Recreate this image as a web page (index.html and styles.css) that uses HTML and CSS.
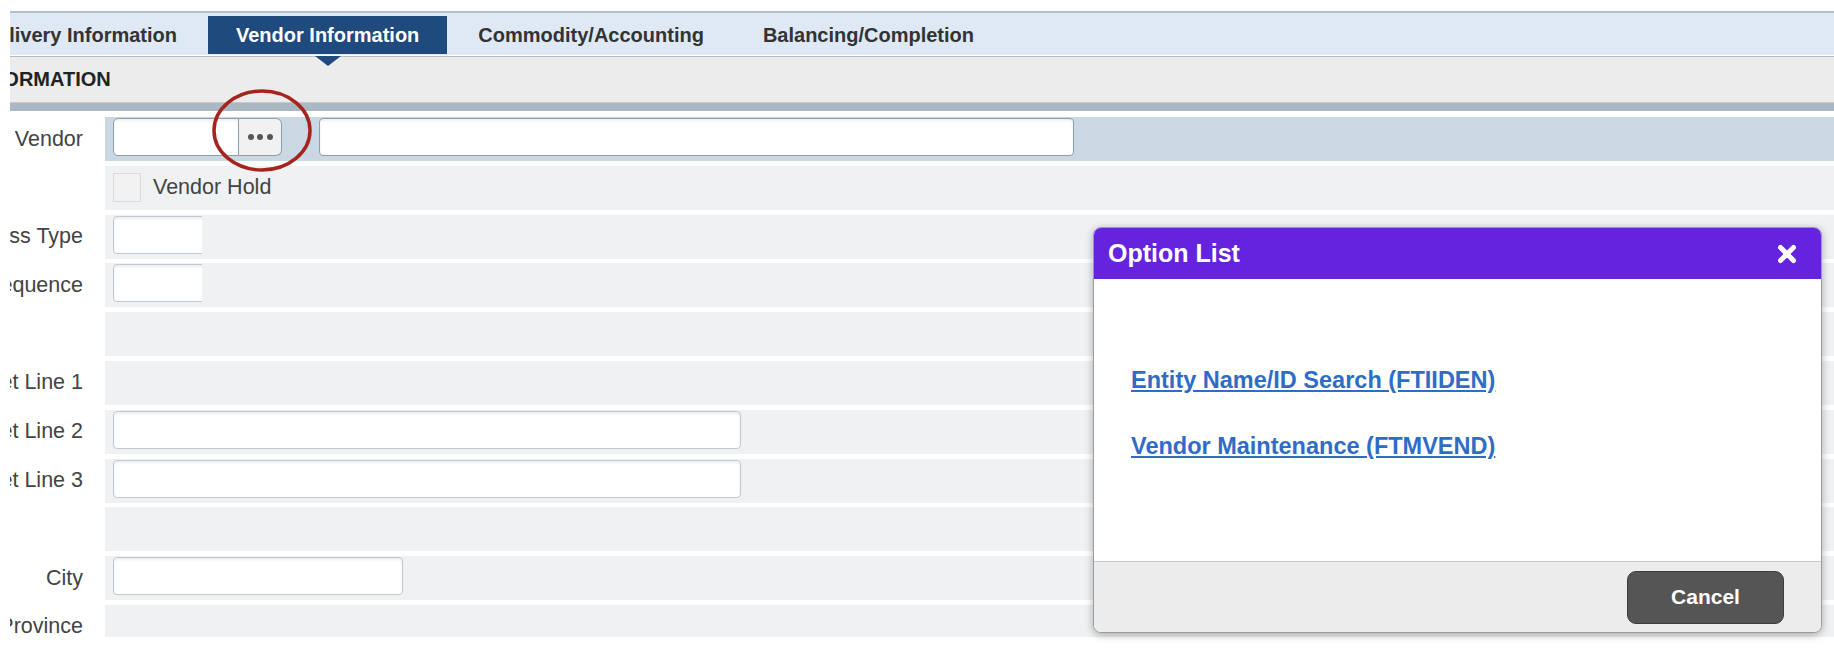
FILE: index.html
```html
<!DOCTYPE html>
<html lang="en">
<head>
  <meta charset="UTF-8">
  <title>Purchase Order - Vendor Information</title>
  <link rel="stylesheet" href="styles.css">
</head>
<body>
  <div class="screen">
    <div class="viewport">
      <div class="tabs">
        <div class="tab tab-first"><span>Requestor/Delivery Information</span></div>
        <div class="tab active">Vendor Information</div>
        <div class="tab">Commodity/Accounting</div>
        <div class="tab">Balancing/Completion</div>
      </div>

      <div class="section-head"><span class="section-title">VENDOR INFORMATION</span></div>
      <div class="section-band"></div>

      <div class="form">
        <div class="row">
          <label class="lbl"><span>Vendor</span></label>
          <div class="field current">
            <div class="lookup">
              <input type="text" class="inp inp-code">
              <button class="dots" type="button"><i></i><i></i><i></i></button>
              <svg class="mark" width="100" height="83" viewBox="0 0 100 83">
                <ellipse cx="50" cy="41.5" rx="48" ry="39.5" fill="none" stroke="#a5241e" stroke-width="3.5"/>
              </svg>
            </div>
            <input type="text" class="inp inp-name">
          </div>
        </div>

        <div class="row">
          <label class="lbl"></label>
          <div class="field middle">
            <span class="check"></span>
            <span class="check-text">Vendor Hold</span>
          </div>
        </div>

        <div class="row">
          <label class="lbl"><span>Address Type</span></label>
          <div class="field">
            <div class="clip"><input type="text" class="inp inp-wide"></div>
          </div>
        </div>

        <div class="row">
          <label class="lbl"><span>Address Sequence</span></label>
          <div class="field">
            <div class="clip"><input type="text" class="inp inp-wide"></div>
          </div>
        </div>

        <div class="row">
          <label class="lbl"></label>
          <div class="field"></div>
        </div>

        <div class="row">
          <label class="lbl"><span>Street Line 1</span></label>
          <div class="field"></div>
        </div>

        <div class="row">
          <label class="lbl"><span>Street Line 2</span></label>
          <div class="field"><input type="text" class="inp inp-street"></div>
        </div>

        <div class="row">
          <label class="lbl"><span>Street Line 3</span></label>
          <div class="field"><input type="text" class="inp inp-street"></div>
        </div>

        <div class="row">
          <label class="lbl"></label>
          <div class="field"></div>
        </div>

        <div class="row">
          <label class="lbl"><span>City</span></label>
          <div class="field"><input type="text" class="inp inp-city"></div>
        </div>

        <div class="row">
          <label class="lbl"><span>State or Province</span></label>
          <div class="field"></div>
        </div>
      </div>
    </div>

    <div class="modal">
      <div class="modal-head">
        <span class="modal-title">Option List</span>
        <svg class="close" width="20" height="20" viewBox="0 0 20 20">
          <path d="M3.5 3.5 L16.5 16.5 M16.5 3.5 L3.5 16.5" stroke="#fff" stroke-width="5" stroke-linecap="round"/>
        </svg>
      </div>
      <div class="modal-body">
        <a href="#">Entity Name/ID Search (FTIIDEN)</a>
        <a href="#">Vendor Maintenance (FTMVEND)</a>
      </div>
      <div class="modal-foot">
        <button class="btn-cancel" type="button">Cancel</button>
      </div>
    </div>
  </div>
</body>
</html>
```

FILE: styles.css
```css
body {
  margin: 0;
  font-family: "Liberation Sans", Arial, sans-serif;
  color: #444;
  background: #fff;
}

.screen {
  position: relative;
  height: 648px;
  padding: 11px 0 0 10px; /* white strip round the scrolled area */
  box-sizing: border-box;
  overflow: hidden;
}

.viewport {
  height: 626px;
  overflow: hidden;
}

/* tab strip */
.tabs {
  display: flex;
  gap: 3px;
  height: 42px;
  background: #dee9f5;
  border-top: 2px solid #b3bec9;
  border-bottom: 1px solid #fff;
}

.tab {
  display: flex;
  align-items: center;
  height: 38px;
  margin-top: 3px;
  padding: 0 28px;
  font-size: 20px;
  font-weight: bold;
  color: #333;
  white-space: nowrap;
}

.tab-first {
  flex: 0 0 195px;
  box-sizing: border-box;
  padding-left: 0;
  justify-content: flex-end; /* clipped on the left, page is scrolled */
  overflow: hidden;
}

.tab.active {
  position: relative;
  background: #1f4a7e;
  color: #fff;
}

.tab.active::after {
  content: "";
  position: absolute;
  left: 50%;
  top: 100%;
  margin: 2px 0 0 -13px;
  border-left: 13px solid transparent;
  border-right: 13px solid transparent;
  border-top: 10px solid #1f4a7e;
}

/* section header */
.section-head {
  display: flex;
  align-items: center;
  height: 45px;
  background: #ececec;
  border-top: 1px solid #bababa;
  border-bottom: 1px solid #c8c8c8;
  overflow: hidden;
}

.section-title {
  margin-left: -130px;
  font-size: 20px;
  font-weight: bold;
  color: #222;
  white-space: nowrap;
}

.section-band {
  height: 8px;
  background: #aab8c6;
}

/* form rows */
.form {
  display: flex;
  flex-direction: column;
  gap: 4.8px;
  margin-top: 6px;
}

.row {
  display: flex;
  height: 44px;
}

.lbl {
  flex: 0 0 95px;
  box-sizing: border-box;
  display: flex;
  justify-content: flex-end;
  align-items: center;
  padding-right: 22px;
  overflow: hidden;
  white-space: nowrap;
  font-size: 21.5px;
  color: #444;
}

.field {
  flex: 1;
  display: flex;
  align-items: flex-start;
  gap: 37px;
  padding: 1px 0 0 8px;
  background: #eff1f3;
}

.field.current {
  background: #c9d8e3;
}

.field.middle {
  align-items: center;
  gap: 12px;
  padding-top: 0;
}

.inp {
  box-sizing: border-box;
  height: 38px;
  margin: 0;
  border: 1px solid #c0c9d1;
  border-radius: 4px;
  background: #fff;
  box-shadow: inset 0 2px 3px rgba(0, 0, 0, 0.07);
  font: inherit;
}

.current .inp {
  border-color: #8e9eac;
}

.lookup {
  position: relative;
  display: flex;
}

.inp-code {
  width: 126px;
  border-radius: 5px 0 0 5px;
}

.dots {
  display: flex;
  align-items: center;
  justify-content: center;
  gap: 3.5px;
  width: 43px;
  height: 38px;
  padding: 0;
  border: 1px solid #8e9eac;
  border-left: none;
  border-radius: 0 6px 6px 0;
  background: #f1f1f1;
}

.dots i {
  width: 6px;
  height: 6px;
  border-radius: 50%;
  background: #555;
}

.mark {
  position: absolute;
  left: 99px;
  top: -29px;
}

.inp-name {
  width: 755px;
}

.check {
  box-sizing: border-box;
  width: 28px;
  height: 29px;
  border: 1px solid #dadada;
  background: #f2f2f2;
}

.check-text {
  font-size: 21.5px;
  color: #444;
}

.clip {
  width: 89px;
  overflow: hidden;
}

.inp-wide {
  width: 160px;
}

.inp-street {
  width: 628px;
}

.inp-city {
  width: 290px;
}

/* option list dialog */
.modal {
  position: absolute;
  left: 1093px;
  top: 227px;
  width: 729px;
  height: 406px;
  box-sizing: border-box;
  display: flex;
  flex-direction: column;
  border: 1px solid #9c9c9c;
  border-radius: 8px;
  overflow: hidden;
  background: #fff;
  box-shadow: 0 2px 8px rgba(0, 0, 0, 0.3);
}

.modal-head {
  display: flex;
  align-items: center;
  justify-content: space-between;
  height: 51px;
  padding: 0 24px 0 14px;
  background: #6623dd;
  color: #fff;
}

.modal-title {
  font-size: 25px;
  font-weight: bold;
}

.modal-body {
  flex: 1;
  display: flex;
  flex-direction: column;
  align-items: flex-start;
  gap: 38px;
  padding: 87px 0 0 37px;
}

.modal-body a {
  font-size: 23.5px;
  line-height: 28px;
  font-weight: bold;
  color: #2e6cc8;
}

.modal-foot {
  display: flex;
  align-items: center;
  justify-content: flex-end;
  height: 70px;
  padding-right: 37px;
  border-top: 1px solid #c9c9c9;
  background: #ececec;
}

.btn-cancel {
  width: 157px;
  height: 53px;
  border: 1px solid #3d3d3d;
  border-radius: 9px;
  background: #555;
  color: #fff;
  font-family: inherit;
  font-size: 21px;
  font-weight: bold;
}
```
